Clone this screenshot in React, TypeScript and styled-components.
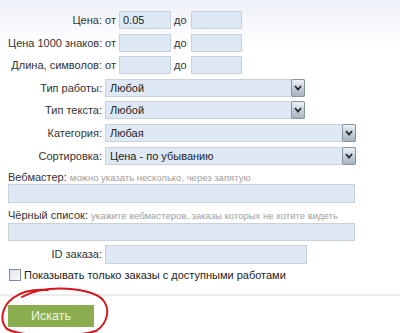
import React from "react";
import styled, { createGlobalStyle } from "styled-components";

const GlobalStyle = createGlobalStyle`
  html, body {
    margin: 0;
    padding: 0;
    background: #fff;
  }
  body {
    font-family: "Liberation Sans", Arial, sans-serif;
    font-size: 11px;
    color: #333;
  }
`;

const Page = styled.div`
  position: relative;
  width: 400px;
  height: 333px;
  overflow: hidden;
  box-sizing: border-box;
  padding: 11px 0 0 8px;
  background: linear-gradient(#eef1fa 0, #f8f9fd 25px, #fff 48px);
`;

const FormGrid = styled.div`
  display: grid;
  grid-template-columns: 94px 1fr;
  column-gap: 3px;
  row-gap: 4.6px;
`;

const Label = styled.div`
  text-align: right;
  line-height: 18px;
  white-space: nowrap;
  color: #333;
`;

const Field = styled.div`
  display: flex;
  align-items: center;
  height: 18px;
`;

const Word = styled.span<{ $w: number }>`
  display: inline-block;
  width: ${({ $w }) => $w}px;
  color: #333;
`;

const Input = styled.div<{ $w?: number; $h?: number }>`
  box-sizing: border-box;
  width: ${({ $w }) => ($w ? `${$w}px` : "100%")};
  height: ${({ $h }) => $h ?? 18}px;
  background: #dfe9f6;
  border: 1px solid #c9d2dc;
  padding: 0 3px;
  line-height: ${({ $h }) => ($h ?? 18) - 2}px;
  color: #222;
`;

const Select = styled.div<{ $w: number }>`
  box-sizing: border-box;
  width: ${({ $w }) => $w}px;
  height: 18px;
  background: #dfe9f6;
  border: 1px solid #c9d2dc;
  display: flex;
  align-items: stretch;
  color: #222;
`;

const SelectValue = styled.div`
  flex: 1;
  padding-left: 4px;
  line-height: 16px;
`;

const ArrowButton = styled.div`
  width: 14px;
  margin: -1px -1px -1px 0;
  box-sizing: border-box;
  border: 1px solid #8793a0;
  border-radius: 2px;
  background: linear-gradient(#eef2f6, #c3ccd6 55%, #a9b4c0);
  display: flex;
  align-items: center;
  justify-content: center;
`;

const Block = styled.div<{ $mt: number }>`
  margin-top: ${({ $mt }) => $mt}px;
  width: 347px;
`;

const BlockLabel = styled.div`
  line-height: 14px;
  height: 14px;
  color: #333;
  white-space: nowrap;
`;

const Hint = styled.span`
  font-size: 9.5px;
  color: #a0a0a0;
`;

const IdRow = styled.div`
  display: grid;
  grid-template-columns: 94px 202px;
  column-gap: 3px;
  margin-top: 4px;
  align-items: center;
`;

const CheckRow = styled.label`
  display: flex;
  align-items: center;
  gap: 3px;
  margin-top: 4px;
  margin-left: 1px;
  height: 14px;
  font-size: 11px;
  color: #222;
`;

const CheckBox = styled.span`
  box-sizing: border-box;
  width: 12px;
  height: 12px;
  border: 1px solid #7a8a99;
  background: linear-gradient(135deg, #dfe3e8, #fbfbfc);
`;

const Divider = styled.div`
  height: 2px;
  background: #ececec;
  margin: 12px 0 0 -8px;
  width: 400px;
`;

const Button = styled.div`
  margin-top: 9px;
  width: 86px;
  height: 22px;
  background: #8aad4f;
  color: #eef5e2;
  font-size: 12.5px;
  text-align: center;
  line-height: 22px;
`;

const Circle = styled.svg`
  position: absolute;
  left: 0;
  top: 284px;
  width: 112px;
  height: 49px;
  pointer-events: none;
`;

const Chevron = () => (
  <svg width="8" height="6" viewBox="0 0 8 6">
    <path d="M1 1 L4 4.5 L7 1" fill="none" stroke="#1e2a36" strokeWidth="1.8" />
  </svg>
);

const Range = ({ from }: { from?: string }) => (
  <Field>
    <Word $w={14}>от</Word>
    <Input $w={52}>{from}</Input>
    <Word $w={3} />
    <Word $w={17}>до</Word>
    <Input $w={51} />
  </Field>
);

const Dropdown = ({ w, value }: { w: number; value: string }) => (
  <Field>
    <Select $w={w}>
      <SelectValue>{value}</SelectValue>
      <ArrowButton>
        <Chevron />
      </ArrowButton>
    </Select>
  </Field>
);

export default function App() {
  return (
    <Page>
      <GlobalStyle />
      <FormGrid>
        <Label>Цена:</Label>
        <Range from="0.05" />
        <Label>Цена 1000 знаков:</Label>
        <Range />
        <Label>Длина, символов:</Label>
        <Range />
        <Label>Тип работы:</Label>
        <Dropdown w={200} value="Любой" />
        <Label>Тип текста:</Label>
        <Dropdown w={200} value="Любой" />
        <Label>Категория:</Label>
        <Dropdown w={251} value="Любая" />
        <Label>Сортировка:</Label>
        <Dropdown w={251} value="Цена - по убыванию" />
      </FormGrid>
      <Block $mt={5}>
        <BlockLabel>
          Вебмастер: <Hint>можно указать несколько, через запятую</Hint>
        </BlockLabel>
        <Input $h={19} />
      </Block>
      <Block $mt={5}>
        <BlockLabel>
          Чёрный список: <Hint>укажите вебмастеров, заказы которых не хотите видеть</Hint>
        </BlockLabel>
        <Input $h={18} style={{ marginTop: 1 }} />
      </Block>
      <IdRow>
        <Label>ID заказа:</Label>
        <Input $h={19} />
      </IdRow>
      <CheckRow>
        <CheckBox />
        Показывать только заказы с доступными работами
      </CheckRow>
      <Divider />
      <Button>Искать</Button>
      <Circle viewBox="0 284 112 49">
        <path
          d="M22 297 C45 284, 92 287, 103 300 C111 310, 107 324, 96 331 C72 338, 22 337, 7 329 C-1 321, 2 306, 13 298 C21 292, 34 289, 48 290"
          fill="none"
          stroke="#d6141b"
          strokeWidth="2"
          strokeLinecap="round"
        />
      </Circle>
    </Page>
  );
}
